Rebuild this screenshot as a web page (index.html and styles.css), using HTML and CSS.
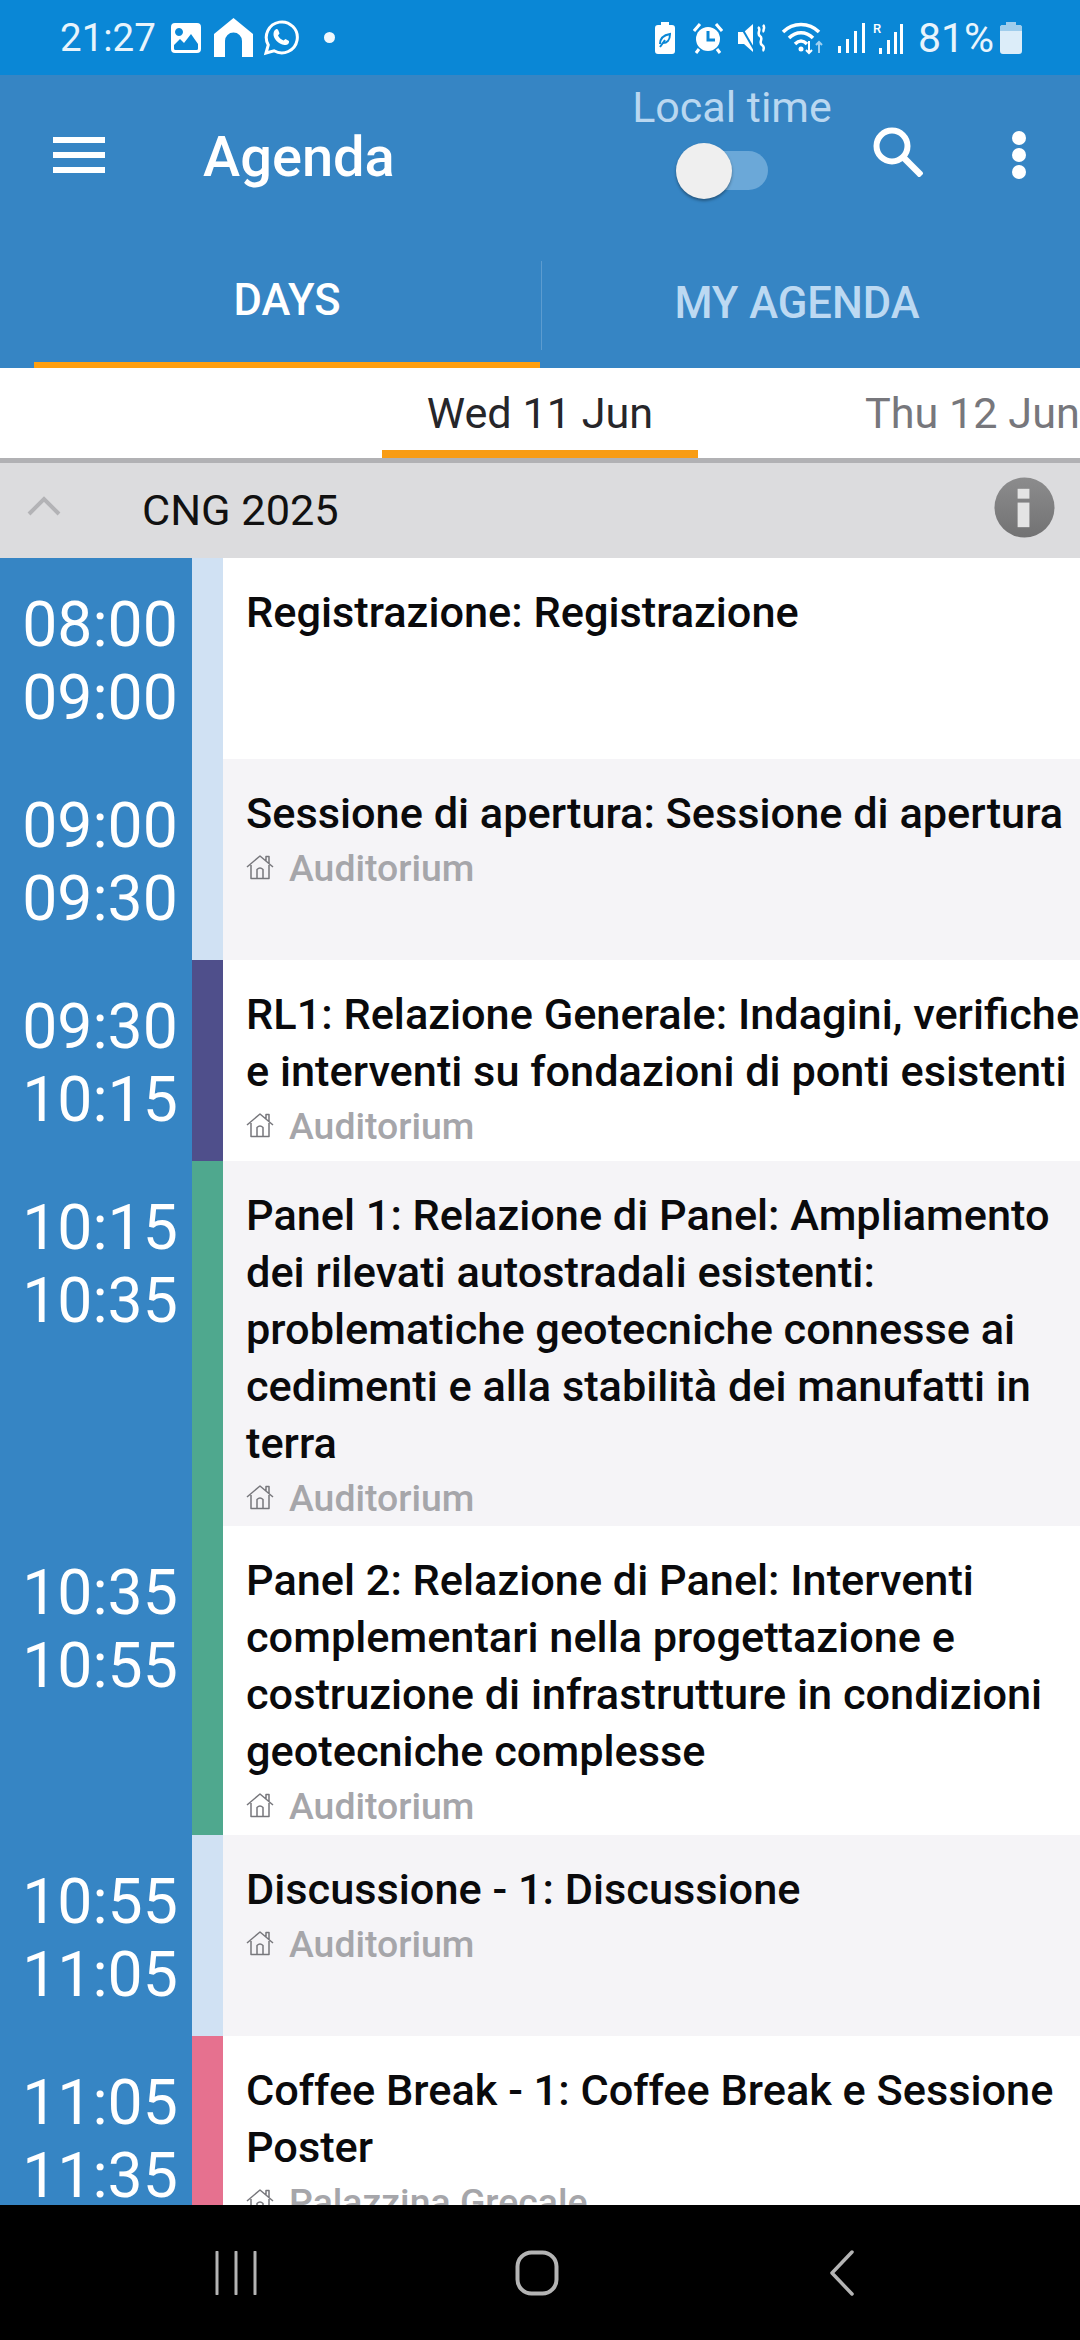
FILE: index.html
```html
<!DOCTYPE html>
<html lang="en">
<head>
<meta charset="utf-8">
<title>Agenda</title>
<link rel="stylesheet" href="styles.css">
</head>
<body>
<svg class="defs" width="0" height="0" aria-hidden="true">
  <defs><linearGradient id="infofill" x1="0" y1="0" x2="0" y2="1"><stop offset="0" stop-color="#8c8c8d"/><stop offset="1" stop-color="#727273"/></linearGradient></defs>
  <symbol id="house" viewBox="0 0 28 26">
    <path d="M1 13 L14 2 L27 13 M20 6.5 V2.5 H23 V9 M5 11 V24.5 H23 V11 M11 24.5 V15.5 Q14 12.5 17 15.5 V24.5" fill="none" stroke="#77777c" stroke-width="1.5" stroke-linejoin="round"/>
  </symbol>
</svg>
<div class="app">
  <header class="status">
    <div class="status-left">
      <span class="clock">21:27</span>
      <svg class="si si-gallery" viewBox="0 0 32 32"><path fill="#fff" fill-rule="evenodd" d="M5 1H27a4 4 0 0 1 4 4V27a4 4 0 0 1-4 4H5a4 4 0 0 1-4-4V5a4 4 0 0 1 4-4ZM4 26.500a1.500 1.500 0 0 0 1.500 1.500H26.500a1.500 1.500 0 0 0 1.500-1.500V22L21 12 14 21 10 17 4 23ZM9 6a4 4 0 1 0 .01 0Z"/></svg>
      <svg class="si si-home" viewBox="0 0 39 39"><path fill="#fff" d="M19.500 0 39 16V39H28V23a8.500 8.500 0 0 0-17 0V39H0V16Z"/></svg>
      <svg class="si si-wa" viewBox="0 0 36 36"><path fill="none" stroke="#fff" stroke-width="3" d="M3 33l2.300-8A15.500 15.500 0 1 1 11 30.800Z"/><path fill="#fff" d="M12 10c2-2 3-1 4 2l.5 1.500-1.500 2c1 2 3 4 5.500 5l2-1.500 3.500 2c.5 3-2 4.500-4.500 4C15 24 10 18 10.500 14c0-1.500.5-3 1.500-4Z"/></svg>
      <span class="sdot"></span>
    </div>
    <div class="status-right">
      <svg class="si si-saver" viewBox="0 0 20 32"><path fill="#fff" d="M6 0h8v3h3a3 3 0 0 1 3 3v23a3 3 0 0 1-3 3H3a3 3 0 0 1-3-3V6a3 3 0 0 1 3-3h3Z"/><path fill="none" stroke="#0a87d6" stroke-width="2" d="M5 22c0-6 4-9 10-10 0 6-3 9-7 9M5 25l5-7"/></svg>
      <svg class="si si-alarm" viewBox="0 0 30 32"><circle cx="15" cy="17" r="12" fill="#fff"/><path d="M15 9v9h7" fill="none" stroke="#0a87d6" stroke-width="3"/><path d="M1 9 7 2M29 9 23 2M6 27l-3 4M24 27l3 4" stroke="#fff" stroke-width="3" fill="none"/></svg>
      <svg class="si si-mute" viewBox="0 0 30 32"><path fill="#fff" d="M0 10h6l9-8v28l-9-8H0Z"/><path d="M2 3 17 29" stroke="#0a87d6" stroke-width="2"/><path d="M20 5c4 3-2 6 2 9s-2 6 2 9 0 4 2 6M25 3c3 3-1 5 1 7" fill="none" stroke="#fff" stroke-width="2.500"/></svg>
      <svg class="si si-wifi" viewBox="0 0 44 34"><path d="M2 11C12 1 28 1 38 11M8 17C15 10 25 10 32 17M14 23C18 19 22 19 26 23" fill="none" stroke="#fff" stroke-width="3.500"/><circle cx="20" cy="28" r="2.500" fill="#fff"/><path d="M28 20v12M25 29l3 3 3-3" fill="none" stroke="#fff" stroke-width="2"/><path d="M38 32V21M35 24l3-3 3 3" fill="none" stroke="#9fd0f0" stroke-width="2"/></svg>
      <svg class="si si-sig" viewBox="0 0 29 30"><path d="M2 23h3v7H2ZM10 16h3v14h-3ZM18 8h3v22h-3ZM26 0h3v30h-3Z" fill="#fff"/></svg>
      <div class="rsig"><span class="rsig-r">R</span><svg class="si si-sig2" viewBox="0 0 24 30"><path d="M0 24h3v6H0ZM8 16h3v14H8ZM15 8h3v22h-3ZM21 0h3v30h-3Z" fill="#fff"/></svg></div>
      <span class="pct">81%</span>
      <svg class="si si-batt" viewBox="0 0 22 32"><path fill="#dcedf9" d="M6 0h10v3h3a3 3 0 0 1 3 3v23a3 3 0 0 1-3 3H3a3 3 0 0 1-3-3V6a3 3 0 0 1 3-3h3Z"/><path fill="#9fcdec" d="M6 0h10v3h3a3 3 0 0 1 3 3v3H0V6a3 3 0 0 1 3-3h3Z"/></svg>
    </div>
  </header>

  <section class="appbar">
    <div class="toolbar">
      <div class="burger"><i></i><i></i><i></i></div>
      <h1 class="title">Agenda</h1>
      <div class="localtime">
        <span class="lt-label">Local time</span>
        <div class="switch"><span class="knob"></span></div>
      </div>
      <svg class="search" viewBox="0 0 50 50"><circle cx="19" cy="19" r="15.500" fill="none" stroke="#fff" stroke-width="6"/><path d="M30 30 48.500 48.500" stroke="#fff" stroke-width="6.500" fill="none"/></svg>
      <div class="more"><i></i><i></i><i></i></div>
    </div>
    <nav class="tabs">
      <div class="tab tab-on">DAYS</div>
      <div class="tab tab-off">MY AGENDA</div>
    </nav>
  </section>

  <div class="dates">
    <div class="date date-on">Wed 11 Jun</div>
    <div class="date date-off">Thu 12 Jun</div>
  </div>

  <div class="group">
    <svg class="chev" viewBox="0 0 34 20"><path d="M2 18 17 3 32 18" fill="none" stroke="#b3b3b6" stroke-width="4"/></svg>
    <span class="group-name">CNG 2025</span>
    <svg class="info" viewBox="0 0 62 62"><circle cx="31" cy="31" r="30.500" fill="url(#infofill)"/><rect x="24" y="12" width="12" height="10" fill="#e4e4e4"/><rect x="24" y="26" width="12" height="25" fill="#e4e4e4"/></svg>
  </div>

  <main class="list">
    <article class="row h201">
      <div class="times"><span>08:00</span><span>09:00</span></div>
      <div class="strip c-light"></div>
      <div class="body"><div class="name">Registrazione: Registrazione</div></div>
    </article>
    <article class="row alt h201">
      <div class="times"><span>09:00</span><span>09:30</span></div>
      <div class="strip c-light"></div>
      <div class="body"><div class="name">Sessione di apertura: Sessione di apertura</div>
        <div class="loc"><svg class="house"><use href="#house"/></svg><span>Auditorium</span></div></div>
    </article>
    <article class="row h201">
      <div class="times"><span>09:30</span><span>10:15</span></div>
      <div class="strip c-indigo"></div>
      <div class="body"><div class="name">RL1: Relazione Generale: Indagini, verifiche<br>e interventi su fondazioni di ponti esistenti</div>
        <div class="loc"><svg class="house"><use href="#house"/></svg><span>Auditorium</span></div></div>
    </article>
    <article class="row alt">
      <div class="times"><span>10:15</span><span>10:35</span></div>
      <div class="strip c-green"></div>
      <div class="body"><div class="name">Panel 1: Relazione di Panel: Ampliamento<br>dei rilevati autostradali esistenti:<br>problematiche geotecniche connesse ai<br>cedimenti e alla stabilità dei manufatti in<br>terra</div>
        <div class="loc"><svg class="house"><use href="#house"/></svg><span>Auditorium</span></div></div>
    </article>
    <article class="row h309">
      <div class="times"><span>10:35</span><span>10:55</span></div>
      <div class="strip c-green"></div>
      <div class="body"><div class="name">Panel 2: Relazione di Panel: Interventi<br>complementari nella progettazione e<br>costruzione di infrastrutture in condizioni<br>geotecniche complesse</div>
        <div class="loc"><svg class="house"><use href="#house"/></svg><span>Auditorium</span></div></div>
    </article>
    <article class="row alt h201">
      <div class="times"><span>10:55</span><span>11:05</span></div>
      <div class="strip c-light"></div>
      <div class="body"><div class="name">Discussione - 1: Discussione</div>
        <div class="loc"><svg class="house"><use href="#house"/></svg><span>Auditorium</span></div></div>
    </article>
    <article class="row h201">
      <div class="times"><span>11:05</span><span>11:35</span></div>
      <div class="strip c-pink"></div>
      <div class="body"><div class="name">Coffee Break - 1: Coffee Break e Sessione<br>Poster</div>
        <div class="loc"><svg class="house"><use href="#house"/></svg><span>Palazzina Grecale</span></div></div>
    </article>
  </main>

  <footer class="navbar">
    <svg class="nav-recent" viewBox="0 0 42 44"><path d="M2 1V43M21 1V43M40 1V43" stroke="#b4b4b4" stroke-width="3" fill="none" stroke-linecap="round"/></svg>
    <svg class="nav-home" viewBox="0 0 44 46"><rect x="2.500" y="2.500" width="39" height="41" rx="14" fill="none" stroke="#b4b4b4" stroke-width="4"/></svg>
    <svg class="nav-back" viewBox="0 0 26 46"><path d="M23 2 3 23 23 44" stroke="#b4b4b4" stroke-width="3.500" fill="none" stroke-linecap="round" stroke-linejoin="round"/></svg>
  </footer>
</div>
</body>
</html>
```
FILE: styles.css
```css
* { box-sizing: border-box; }
html, body { margin: 0; padding: 0; }
body { width: 1080px; height: 2340px; overflow: hidden; font-family: Roboto, "Liberation Sans", sans-serif; background: #fff; }
.defs { position: absolute; }
.app { width: 1080px; height: 2340px; display: flex; flex-direction: column; overflow: hidden; }

/* status bar */
.status { height: 75px; flex: none; background: #0a87d6; display: flex; justify-content: space-between; align-items: center; padding: 0 58px 0 60px; color: #e8f4fc; }
.status-left, .status-right { display: flex; align-items: center; }
.clock { font-size: 38.500px; width: 110px; letter-spacing: 0; }
.si { display: block; flex: none; }
.si-gallery { width: 32px; height: 32px; }
.si-home { width: 39px; height: 39px; margin-left: 12px; }
.si-wa { width: 36px; height: 36px; margin-left: 10px; }
.sdot { width: 11px; height: 11px; border-radius: 50%; background: #f0f8fd; margin-left: 25px; }
.si-saver { width: 20px; height: 32px; }
.si-alarm { width: 30px; height: 32px; margin-left: 18px; }
.si-mute { width: 30px; height: 32px; margin-left: 15px; }
.si-wifi { width: 44px; height: 34px; margin-left: 13px; }
.si-sig { width: 29px; height: 30px; margin-left: 11px; }
.rsig { position: relative; width: 30px; height: 32px; margin-left: 8px; }
.rsig-r { position: absolute; left: 0; top: 0; font-size: 13px; font-weight: 500; color: #fff; line-height: 13px; }
.si-sig2 { position: absolute; right: 0; bottom: 0; width: 24px; height: 30px; }
.pct { font-size: 41px; margin-left: 15px; }
.si-batt { width: 22px; height: 32px; margin-left: 6px; }

/* app bar */
.appbar { height: 293px; flex: none; background: #3685c4; display: flex; flex-direction: column; }
.toolbar { height: 165px; flex: none; position: relative; display: flex; align-items: flex-start; padding-left: 53px; }
.burger { width: 52px; margin-top: 62px; display: flex; flex-direction: column; gap: 9px; }
.burger i { display: block; height: 6px; background: #fff; }
.title { margin: 49px 0 0 98px; font-size: 56px; line-height: 66px; font-weight: 500; color: #fff; }
.localtime { position: absolute; left: 600px; top: 0; width: 264px; display: flex; flex-direction: column; align-items: center; }
.lt-label { font-size: 43px; line-height: 48px; margin-top: 8px; color: #b9d7f0; }
.switch { position: relative; width: 66px; height: 39px; margin: 20px 0 0 6px; border-radius: 20px; background: #6ba8d8; }
.knob { position: absolute; left: -26px; top: -8px; width: 56px; height: 56px; border-radius: 50%; background: #efefef; box-shadow: 0 2px 3px rgba(0,0,0,.35); }
.search { position: absolute; left: 873px; top: 52px; width: 50px; height: 50px; }
.more { position: absolute; left: 1012px; top: 56px; width: 14px; display: flex; flex-direction: column; gap: 3px; }
.more i { display: block; width: 14px; height: 14px; border-radius: 50%; background: #fff; }
.tabs { display: flex; padding-left: 34px; flex: 1; }
.tab { height: 128px; display: flex; align-items: center; justify-content: center; font-size: 43.500px; font-weight: 500; padding-bottom: 2px; }
.tab-on { width: 506px; color: #fff; border-bottom: 6px solid #ff9f0f; }
.tab-off { flex: 1; color: #bcd9f2; position: relative; padding-right: 26px; }
.tab-off::before { content: ""; position: absolute; left: 1px; top: 21px; height: 89px; width: 1px; background: #5c9cd0; }

/* date tabs */
.dates { height: 90px; flex: none; background: #fff; display: flex; padding-left: 382px; overflow: hidden; white-space: nowrap; }
.date { font-size: 43.200px; height: 90px; display: flex; align-items: center; }
.date-on { width: 316px; justify-content: center; color: #26262a; border-bottom: 8px solid #f89c14; padding-top: 8px; }
.date-off { margin-left: 167px; color: #77777c; }

/* group */
.group { height: 100px; flex: none; background: #dcdcde; border-top: 5px solid #b1b1b4; display: flex; align-items: center; padding-left: 27px; position: relative; }
.chev { width: 34px; height: 20px; margin-bottom: 10px; }
.group-name { font-size: 43.300px; margin-left: 81px; color: #111; }
.info { position: absolute; left: 994px; top: 14px; width: 61px; height: 61px; }

/* list */
.list { flex: 1; min-height: 0; overflow: hidden; }
.row { display: flex; background: #fff; }
.row.alt { background: #f5f4f7; }
.h201 { height: 201px; }
.h309 { height: 309px; }
.times { width: 192px; flex: none; background: #3685c4; color: #fff; font-size: 62.500px; line-height: 73px; padding: 30px 0 0 8px; display: flex; flex-direction: column; align-items: center; }
.strip { width: 31px; flex: none; }
.c-light { background: #d0e1f3; }
.c-indigo { background: #4f4f8b; }
.c-green { background: #4fa88e; }
.c-pink { background: #e6718f; }
.body { flex: 1; min-width: 0; padding: 26px 0 0 23px; white-space: nowrap; }
.name { font-size: 43.300px; line-height: 57px; font-weight: 500; color: #0a0a0c; }
.loc { display: flex; align-items: center; height: 54px; padding-bottom: 2px; font-size: 37.400px; font-weight: 500; color: #a6a6aa; line-height: 52px; }
.house { width: 28px; height: 26px; margin-right: 15px; margin-top: -2px; flex: none; }

/* system nav */
.navbar { height: 135px; flex: none; background: #000; position: relative; z-index: 1; display: flex; align-items: center; padding-left: 215px; }
.nav-recent { width: 42px; height: 44px; }
.nav-home { width: 44px; height: 46px; margin-left: 258px; }
.nav-back { width: 26px; height: 46px; margin-left: 270px; }
```
